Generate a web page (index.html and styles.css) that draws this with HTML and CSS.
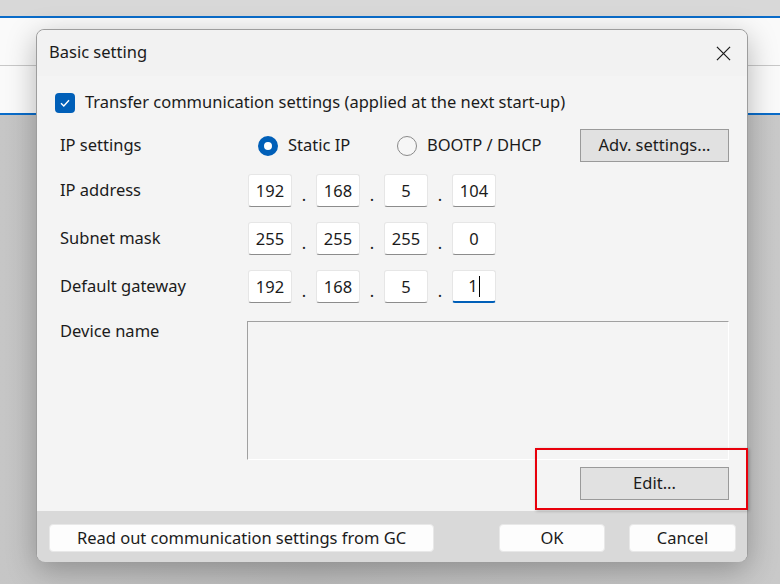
FILE: index.html
```html
<!DOCTYPE html>
<html>
  <head>
    <meta charset="UTF-8">
    <title>Basic setting</title>
    <link rel="stylesheet" href="styles.css">
  </head>
  <body>
    <div class="desktop">
      <div class="app-top"></div>
      <div class="app-toolbar">
        <div class="toolbar-row"></div>
        <div class="toolbar-row"></div>
      </div>
      <div class="app-body"></div>

      <div class="dialog">
        <div class="dialog-title">
          <span>Basic setting</span>
          <svg class="close" width="16" height="16" viewBox="0 0 16 16">
            <path d="M1 1 L15 15 M15 1 L1 15" stroke="#1a1a1a" stroke-width="1.3" fill="none"/>
          </svg>
        </div>

        <div class="dialog-body">
          <div class="check-row">
            <span class="checkbox">
              <svg width="12" height="12" viewBox="0 0 12 12">
                <path d="M2 6.3 L4.8 9 L10 3.2" stroke="#fff" stroke-width="1.4" fill="none"/>
              </svg>
            </span>
            <span>Transfer communication settings (applied at the next start-up)</span>
          </div>

          <div class="row row-ipset">
            <div class="label">IP settings</div>
            <div class="field">
              <span class="radio-opt">
                <span class="radio checked"></span>
                <span class="radio-text">Static IP</span>
              </span>
              <span class="radio-opt">
                <span class="radio"></span>
                <span class="radio-text">BOOTP / DHCP</span>
              </span>
              <button class="btn-classic">Adv. settings...</button>
            </div>
          </div>

          <div class="row row-ip">
            <div class="label">IP address</div>
            <div class="field">
              <span class="octet">192</span><span class="dot">.</span>
              <span class="octet">168</span><span class="dot">.</span>
              <span class="octet">5</span><span class="dot">.</span>
              <span class="octet">104</span>
            </div>
          </div>

          <div class="row row-ip">
            <div class="label">Subnet mask</div>
            <div class="field">
              <span class="octet">255</span><span class="dot">.</span>
              <span class="octet">255</span><span class="dot">.</span>
              <span class="octet">255</span><span class="dot">.</span>
              <span class="octet">0</span>
            </div>
          </div>

          <div class="row row-ip">
            <div class="label">Default gateway</div>
            <div class="field">
              <span class="octet">192</span><span class="dot">.</span>
              <span class="octet">168</span><span class="dot">.</span>
              <span class="octet">5</span><span class="dot">.</span>
              <span class="octet focused">1<span class="caret"></span></span>
            </div>
          </div>

          <div class="row row-device">
            <div class="label">Device name</div>
            <div class="textarea"></div>
          </div>

          <div class="edit-row">
            <button class="btn-classic">Edit...</button>
          </div>
        </div>

        <div class="dialog-footer">
          <button class="btn-modern btn-read">Read out communication settings from GC</button>
          <div class="footer-right">
            <button class="btn-modern btn-ok">OK</button>
            <button class="btn-modern btn-cancel">Cancel</button>
          </div>
        </div>

        <div class="highlight"></div>
      </div>
    </div>
  </body>
</html>
```

FILE: styles.css
```css
body {
  margin: 0;
  font-family: "Noto Sans", "Open Sans", sans-serif;
  color: #1b1b1b;
}
.desktop {
  position: relative;
  width: 780px;
  height: 584px;
  overflow: hidden;
  background: linear-gradient(90deg, #c6c6c6, #bdbdbd 40%, #c9c9c9 100%);
}
.app-top {
  height: 16px;
  background-color: #d8d8d8;
  border-bottom: 2px solid #0a6cc9;
}
.app-toolbar {
  background-color: #fafafa;
  border-bottom: 2px solid #0a6cc9;
}
.toolbar-row {
  height: 47px;
}
.toolbar-row:first-child {
  border-bottom: 1px solid #c8c8c8;
}
.dialog {
  position: absolute;
  left: 36px;
  top: 29px;
  width: 710px;
  height: 531px;
  border: 1px solid #9d9d9d;
  border-radius: 8px;
  background-color: #f4f4f4;
  box-shadow: 0 8px 30px rgba(0, 0, 0, 0.28);
}
.dialog-title {
  height: 44px;
  display: flex;
  align-items: center;
  justify-content: space-between;
  padding: 0 16px 2px 12px;
  background-color: #f2f2f2;
  border-radius: 8px 8px 0 0;
  font-size: 16.5px;
  line-height: 20px;
}
.close {
  display: block;
  width: 15px;
  height: 15px;
  margin-top: 2px;
}
.dialog-body {
  height: 435px;
  box-sizing: border-box;
  padding: 17px 18px 0 18px;
  font-size: 16.5px;
  line-height: 20px;
}
.check-row {
  display: flex;
  align-items: center;
  height: 20px;
  gap: 10px;
}
.check-row span:last-child {
  margin-top: -3px;
}
.checkbox {
  width: 20px;
  height: 20px;
  border-radius: 4px;
  background-color: #005fb8;
  display: flex;
  align-items: center;
  justify-content: center;
}
.checkbox svg {
  display: block;
}
.row {
  display: flex;
  padding-left: 5px;
}
.label {
  width: 188px;
  flex: none;
}
.field {
  flex: 1;
  display: flex;
  align-items: center;
}
.row-ipset {
  margin-top: 16px;
  height: 33px;
  align-items: center;
}
.row-ipset .label {
  margin-top: -2px;
}
.row-ipset .field {
  padding-left: 10px;
}
.radio-opt {
  flex: none;
  display: flex;
  align-items: center;
  white-space: nowrap;
}
.radio-opt:first-child {
  width: 139px;
}
.radio-text {
  margin-left: 10px;
  margin-top: -2px;
}
.radio {
  width: 18px;
  height: 18px;
  border-radius: 50%;
  border: 1px solid #8a8a8a;
  background-color: #f6f6f6;
  flex: none;
}
.radio.checked {
  width: 8px;
  height: 8px;
  border: 6px solid #005fb8;
  background-color: #fff;
}
.btn-classic {
  font-family: inherit;
  font-size: 16.5px;
  color: #1b1b1b;
  width: 149px;
  height: 33px;
  background-color: #e1e1e1;
  border: 1px solid #9a9a9a;
  border-radius: 0;
  padding: 0 0 2px 0;
  flex: none;
}
.row-ipset .btn-classic {
  margin-left: auto;
}
.row-ip {
  height: 33px;
  align-items: center;
  margin-top: 15px;
}
.row-ip .label {
  margin-top: -2px;
}
.row-ipset + .row-ip {
  margin-top: 12px;
}
.octet {
  width: 42px;
  height: 31px;
  box-sizing: content-box;
  background-color: #fff;
  border: 1px solid #e6e6e6;
  border-bottom-color: #8c8c8c;
  border-radius: 3px;
  display: flex;
  align-items: center;
  justify-content: center;
}
.octet.focused {
  height: 30px;
  border-bottom: 2px solid #005fb8;
}
.caret {
  display: inline-block;
  width: 1px;
  height: 21px;
  background-color: #000;
  margin-left: 1px;
}
.dot {
  width: 24px;
  text-align: center;
  padding-top: 8px;
}
.row-device {
  margin-top: 18px;
}
.row-device .label {
  width: 187px;
}
.textarea {
  flex: 1;
  height: 137px;
  border: 1px solid #ffffff;
  border-top-color: #a0a0a0;
  border-left-color: #a0a0a0;
}
.edit-row {
  display: flex;
  justify-content: flex-end;
  margin-top: 7px;
}
.dialog-footer {
  height: 51px;
  box-sizing: border-box;
  padding: 13px 11px 0 12px;
  display: flex;
  justify-content: space-between;
  align-items: flex-start;
  background-color: #d9d9d9;
  border-radius: 0 0 8px 8px;
}
.footer-right {
  display: flex;
  gap: 24px;
}
.btn-modern {
  font-family: inherit;
  font-size: 16.5px;
  color: #1b1b1b;
  height: 28px;
  background-color: #fdfdfd;
  border: 1px solid #e8e8e8;
  border-radius: 4px;
  padding: 0 0 2px 0;
}
.btn-read {
  width: 385px;
}
.btn-ok {
  width: 106px;
}
.btn-cancel {
  width: 107px;
}
.highlight {
  position: absolute;
  left: 498px;
  top: 418px;
  width: 209px;
  height: 58px;
  border: 2px solid #e8000b;
  box-shadow: 1px 1px 3px rgba(0, 0, 0, 0.25);
}
```
